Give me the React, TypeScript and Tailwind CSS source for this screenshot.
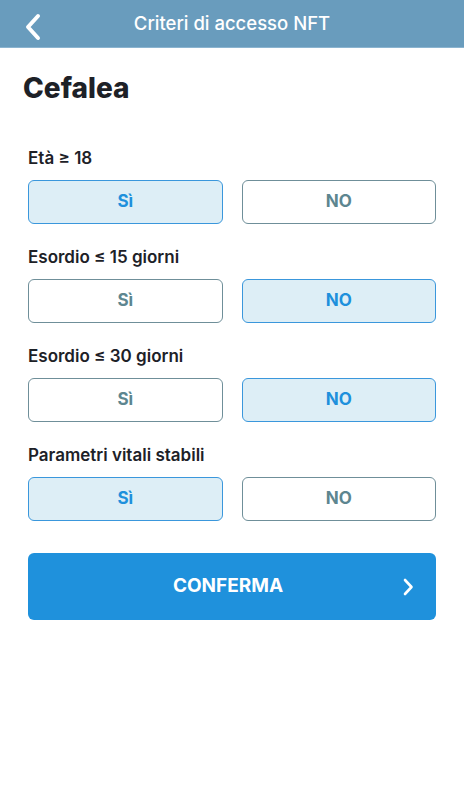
import { useState } from 'react';

type Answer = 'si' | 'no';

const criteria: { label: string; initial: Answer }[] = [
  { label: 'Età ≥ 18', initial: 'si' },
  { label: 'Esordio ≤ 15 giorni', initial: 'no' },
  { label: 'Esordio ≤ 30 giorni', initial: 'no' },
  { label: 'Parametri vitali stabili', initial: 'si' },
];

const optionClass = (active: boolean) =>
  `flex h-[44px] flex-1 items-center justify-center rounded-[6px] border text-[17px] font-bold ${
    active
      ? 'border-[#3a97dc] bg-[#ddeef6] text-[#1e90dc]'
      : 'border-[#6f8f99] bg-white text-[#5d8690]'
  }`;

export default function App() {
  const [answers, setAnswers] = useState<Answer[]>(criteria.map((c) => c.initial));

  const pick = (i: number, value: Answer) =>
    setAnswers((prev) => prev.map((a, idx) => (idx === i ? value : a)));

  return (
    <div className="min-h-[800px] bg-white font-['Inter',sans-serif]">
      <header className="relative flex h-[48px] items-center justify-center border-b border-[#8bb4d0] bg-[#699cbd]">
        <button type="button" className="absolute left-[20px] top-[9px] p-1">
          <svg width="17" height="28" viewBox="0 0 17 28" fill="none">
            <path d="M14 3 L4 14 L14 25" stroke="white" strokeWidth="4" strokeLinecap="round" strokeLinejoin="round" />
          </svg>
        </button>
        <h1 className="text-[18.5px] font-medium text-white">Criteri di accesso NFT</h1>
      </header>

      <main className="px-[28px] pt-[24px]">
        <h2 className="-ml-[5px] text-[28px] font-extrabold leading-[32px] text-[#1d2127]">Cefalea</h2>

        <div className="mt-[43px]">
          {criteria.map((c, i) => (
            <section key={c.label} className="mb-[22px]">
              <p className="text-[17px] font-semibold leading-[22px] text-[#1d2127]">{c.label}</p>
              <div className="mt-[11px] flex gap-[19px]">
                <button type="button" onClick={() => pick(i, 'si')} className={optionClass(answers[i] === 'si')}>
                  Sì
                </button>
                <button type="button" onClick={() => pick(i, 'no')} className={optionClass(answers[i] === 'no')}>
                  NO
                </button>
              </div>
            </section>
          ))}
        </div>

        <button
          type="button"
          className="relative mt-[32px] flex h-[67px] w-full items-center justify-center rounded-[6px] bg-[#1f91dc] text-[19px] font-bold text-white"
        >
          <span className="-ml-[8px]">CONFERMA</span>
          <svg className="absolute right-[22px]" width="12" height="18" viewBox="0 0 12 18" fill="none">
            <path d="M3 2 L9.5 9 L3 16" stroke="white" strokeWidth="2.6" strokeLinecap="round" strokeLinejoin="round" />
          </svg>
        </button>
      </main>
    </div>
  );
}
